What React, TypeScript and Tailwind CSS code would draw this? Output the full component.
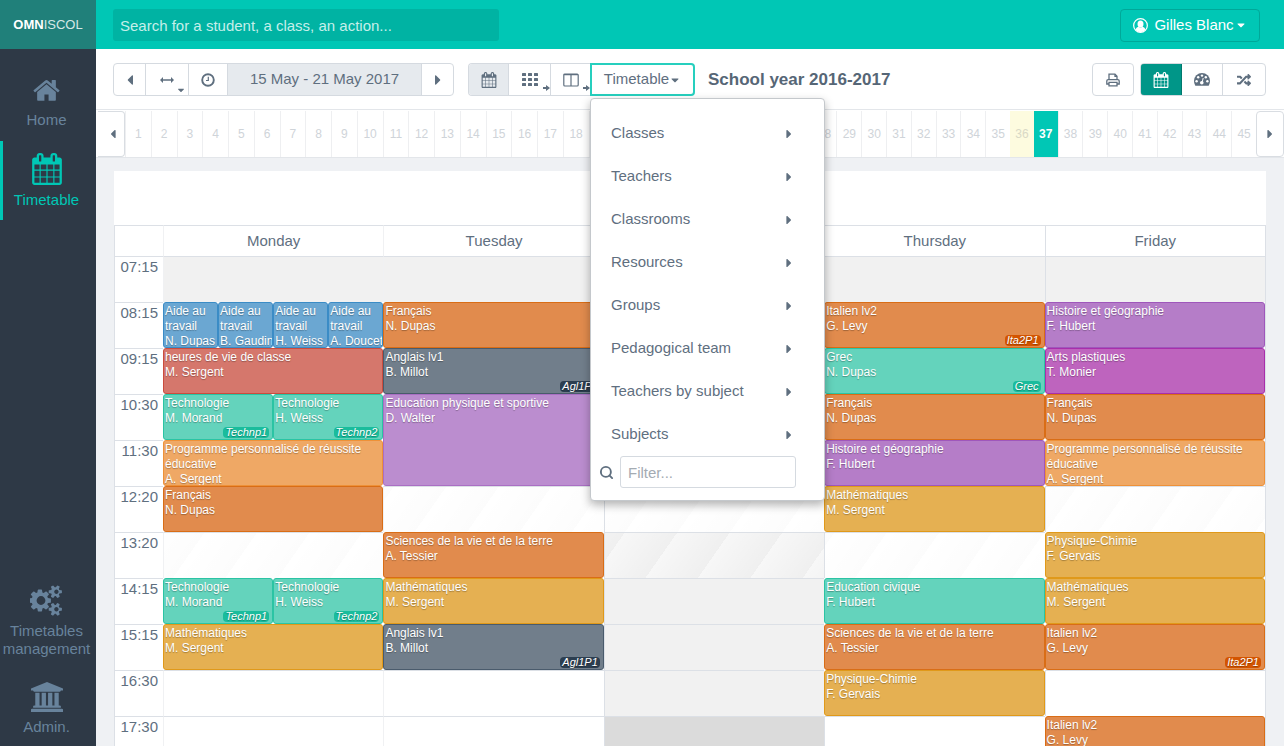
import React from "react";
import { FaCaretDown, FaCaretLeft, FaCaretRight, FaRandom } from "react-icons/fa";
import { Search } from "lucide-react";

type Colour =
  | "orange"
  | "slate"
  | "purple"
  | "lilac"
  | "teal"
  | "blue"
  | "red"
  | "peach"
  | "yellow"
  | "magenta";

type Lesson = { subject: string; teacher: string; colour: Colour; group?: string };
type Slot = { lessons?: Lesson[]; span?: number; shade?: "light" | "dark" } | null;

const eventColours: Record<Colour, string> = {
  orange: "bg-[#e18b4d] border-[#d96d16]",
  slate: "bg-[#717e8b] border-[#4a5b6c]",
  purple: "bg-[#b57dc8] border-[#9f57bb]",
  lilac: "bg-[#bb8dcf] border-[#aa6fc3]",
  teal: "bg-[#64d3bc] border-[#2bc4a4]",
  blue: "bg-[#6ba7d2] border-[#3b8cc6]",
  red: "bg-[#d5776c] border-[#cb4c3e]",
  peach: "bg-[#efa865] border-[#ee9138]",
  yellow: "bg-[#e5b052] border-[#e0991a]",
  magenta: "bg-[#be64be] border-[#a92fab]",
};

const tagColours: Record<Colour, string> = {
  orange: "bg-[#d35400]",
  slate: "bg-[#2c3e50]",
  purple: "bg-[#8e44ad]",
  lilac: "bg-[#8e44ad]",
  teal: "bg-[#1abc9c]",
  blue: "bg-[#2980b9]",
  red: "bg-[#c0392b]",
  peach: "bg-[#e67e22]",
  yellow: "bg-[#d68910]",
  magenta: "bg-[#9b1f9e]",
};

const L = (subject: string, teacher: string, colour: Colour, group?: string): Lesson => ({
  subject,
  teacher,
  colour,
  group,
});
const one = (...lessons: Lesson[]): Slot => ({ lessons });

const francais = L("Français", "N. Dupas", "orange");
const maths = L("Mathématiques", "M. Sergent", "yellow");
const anglais = L("Anglais lv1", "B. Millot", "slate", "Agl1P1");
const techno = one(
  L("Technologie", "M. Morand", "teal", "Technp1"),
  L("Technologie", "H. Weiss", "teal", "Technp2"),
);
const histoire = L("Histoire et géographie", "F. Hubert", "purple");
const italien = L("Italien lv2", "G. Levy", "orange", "Ita2P1");
const programme = L("Programme personnalisé de réussite éducative", "A. Sergent", "peach");
const sciences = L("Sciences de la vie et de la terre", "A. Tessier", "orange");
const physique = L("Physique-Chimie", "F. Gervais", "yellow");
const free: Slot = {};
const grey: Slot = { shade: "light" };

const rows: { time: string; striped?: boolean; slots: Slot[] }[] = [
  { time: "07:15", slots: [grey, grey, grey, grey, grey] },
  {
    time: "08:15",
    slots: [
      one(
        L("Aide au travail", "N. Dupas", "blue"),
        L("Aide au travail", "B. Gaudin", "blue"),
        L("Aide au travail", "H. Weiss", "blue"),
        L("Aide au travail", "A. Doucet", "blue"),
      ),
      one(francais),
      free,
      one(italien),
      one(histoire),
    ],
  },
  {
    time: "09:15",
    slots: [
      one(L("heures de vie de classe", "M. Sergent", "red")),
      one(anglais),
      free,
      one(L("Grec", "N. Dupas", "teal", "Grec")),
      one(L("Arts plastiques", "T. Monier", "magenta")),
    ],
  },
  {
    time: "10:30",
    slots: [
      techno,
      { lessons: [L("Education physique et sportive", "D. Walter", "lilac")], span: 2 },
      free,
      one(francais),
      one(francais),
    ],
  },
  { time: "11:30", slots: [one(programme), null, free, one(histoire), one(programme)] },
  { time: "12:20", striped: true, slots: [one(francais), free, free, one(maths), free] },
  { time: "13:20", striped: true, slots: [free, one(sciences), grey, free, one(physique)] },
  {
    time: "14:15",
    slots: [techno, one(maths), grey, one(L("Education civique", "F. Hubert", "teal")), one(maths)],
  },
  { time: "15:15", slots: [one(maths), one(anglais), grey, one(sciences), one(italien)] },
  { time: "16:30", slots: [free, free, grey, one(physique), free] },
  { time: "17:30", slots: [free, free, { shade: "dark" }, free, one(L("Italien lv2", "G. Levy", "orange"))] },
];

const days = ["Monday", "Tuesday", "Wednesday", "Thursday", "Friday"];
const menuItems = [
  "Classes",
  "Teachers",
  "Classrooms",
  "Resources",
  "Groups",
  "Pedagogical team",
  "Teachers by subject",
  "Subjects",
];
const weeks = Array.from({ length: 45 }, (_, i) => i + 1);

type IconProps = { className?: string };

function HomeIcon({ className }: IconProps) {
  return (
    <svg viewBox="64 200 1664 1400" className={className} fill="currentColor" aria-hidden="true">
      <path d="M1472 992v480q0 26-19 45t-45 19h-384v-384h-256v384h-384q-26 0-45-19t-19-45v-480q0-1 .5-3t.5-3l575-474 575 474q1 2 1 6zm223-69l-62 74q-8 9-21 11h-3q-13 0-21-7l-692-577-692 577q-12 8-24 7-13-2-21-11l-62-74q-8-10-7-23.5t11-21.5l719-599q32-26 76-26t76 26l244 204v-195q0-14 9-23t23-9h192q14 0 23 9t9 23v408l219 182q10 8 11 21.5t-7 23.5z" />
    </svg>
  );
}

function CalendarIcon({ className }: IconProps) {
  return (
    <svg viewBox="64 0 1664 1792" className={className} fill="currentColor" aria-hidden="true">
      <path d="M192 1664h288v-288h-288v288zm352 0h320v-288h-320v288zm-352-352h288v-320h-288v320zm352 0h320v-320h-320v320zm-352-384h288v-288h-288v288zm736 736h320v-288h-320v288zm-384-736h320v-288h-320v288zm768 736h288v-288h-288v288zm-384-352h320v-320h-320v320zm-352-864v-288q0-13-9.5-22.5t-22.5-9.5h-64q-13 0-22.5 9.5t-9.5 22.5v288q0 13 9.5 22.5t22.5 9.5h64q13 0 22.5-9.5t9.5-22.5zm736 864h288v-320h-288v320zm-384-384h320v-288h-320v288zm384 0h288v-288h-288v288zm32-480v-288q0-13-9.5-22.5t-22.5-9.5h-64q-13 0-22.5 9.5t-9.5 22.5v288q0 13 9.5 22.5t22.5 9.5h64q13 0 22.5-9.5t9.5-22.5zm384-64v1280q0 52-38 90t-90 38h-1408q-52 0-90-38t-38-90v-1280q0-52 38-90t90-38h128v-96q0-66 47-113t113-47h64q66 0 113 47t47 113v96h384v-96q0-66 47-113t113-47h64q66 0 113 47t47 113v96h128q52 0 90 38t38 90z" />
    </svg>
  );
}

function CogsIcon({ className }: IconProps) {
  return (
    <svg viewBox="0 0 1920 1792" className={className} fill="currentColor" aria-hidden="true">
      <path d="M896 896q0-106-75-181t-181-75-181 75-75 181 75 181 181 75 181-75 75-181zm768 512q0-52-38-90t-90-38-90 38-38 90q0 53 37.5 90.5t90.5 37.5 90.5-37.5 37.5-90.5zm0-1024q0-52-38-90t-90-38-90 38-38 90q0 53 37.5 90.5t90.5 37.5 90.5-37.5 37.5-90.5zm-448 421v185q0 10-7 19.5t-16 10.5l-155 24q-11 35-32 76 34 48 90 115 7 11 7 20 0 12-7 19-23 30-82.500 89.500t-78.500 59.500q-11 0-21-7l-115-90q-37 19-77 31-11 108-23 155-7 24-30 24h-186q-11 0-20-7.500t-10-17.500l-23-153q-34-10-75-31l-118 89q-7 7-20 7-11 0-21-8-144-133-144-160 0-9 7-19 10-14 41-53t47-61q-23-44-35-82l-152-24q-10-1-17-9.500t-7-19.500v-185q0-10 7-19.500t16-10.500l155-24q11-35 32-76-34-48-90-115-7-11-7-20 0-12 7-20 22-30 82-89t79-59q11 0 21 7l115 90q34-18 77-32 11-108 23-154 7-24 30-24h186q11 0 20 7.500t10 17.500l23 153q34 10 75 31l118-89q8-7 20-7 11 0 21 8 144 133 144 160 0 8-7 19-12 16-42 54t-45 60q23 48 34 82l152 23q10 2 17 10.500t7 19.500zm640 533v140q0 16-149 31-12 27-30 52 51 113 51 138 0 4-4 7-122 71-124 71-8 0-46-47t-52-68q-20 2-30 2t-30-2q-14 21-52 68t-46 47q-2 0-124-71-4-3-4-7 0-25 51-138-18-25-30-52-149-15-149-31v-140q0-16 149-31 13-29 30-52-51-113-51-138 0-4 4-7 4-2 35-20t59-34 30-16q8 0 46 46.500t52 67.500q20-2 30-2t30 2q51-71 92-112l6-2q4 0 124 70 4 3 4 7 0 25-51 138 17 23 30 52 149 15 149 31zm0-1024v140q0 16-149 31-12 27-30 52 51 113 51 138 0 4-4 7-122 71-124 71-8 0-46-47t-52-68q-20 2-30 2t-30-2q-14 21-52 68t-46 47q-2 0-124-71-4-3-4-7 0-25 51-138-18-25-30-52-149-15-149-31v-140q0-16 149-31 13-29 30-52-51-113-51-138 0-4 4-7 4-2 35-20t59-34 30-16q8 0 46 46.500t52 67.500q20-2 30-2t30 2q51-71 92-112l6-2q4 0 124 70 4 3 4 7 0 25-51 138 17 23 30 52 149 15 149 31z" />
    </svg>
  );
}

function BankIcon({ className }: IconProps) {
  return (
    <svg viewBox="0 0 1920 1792" className={className} fill="currentColor" aria-hidden="true">
      <path d="M960 0l960 384v128h-128q0 26-20.5 45t-48.5 19h-1526q-28 0-48.5-19t-20.5-45h-128v-128zM256 640h256v768h128v-768h256v768h128v-768h256v768h128v-768h256v768h59q28 0 48.5 19t20.5 45v64h-1664v-64q0-26 20.5-45t48.5-19h59v-768zM1851 1600q28 0 48.5 19t20.5 45v128h-1920v-128q0-26 20.5-45t48.5-19h1782z" />
    </svg>
  );
}

function PrintIcon({ className }: IconProps) {
  return (
    <svg viewBox="0 0 14 14" className={className} fill="none" stroke="currentColor" strokeWidth="1.3" aria-hidden="true">
      <path d="M3 7V1.2h6L11 3.2V7" />
      <path d="M9 1.2v2.2h2" />
      <path d="M3 11H.8V8q0-1.4 1.4-1.4h9.6q1.4 0 1.4 1.4v3H11" />
      <path d="M3 9.4h8v3.4H3z" />
    </svg>
  );
}

function GaugeIcon({ className }: IconProps) {
  return (
    <svg viewBox="0 0 16 13" className={className} aria-hidden="true">
      <path fill="currentColor" d="M8 0a8 8 0 0 0-8 8q0 2.4 1.2 4.4.2.3.6.3h12.4q.4 0 .6-.3Q16 10.4 16 8a8 8 0 0 0-8-8z" />
      <g fill="#fff">
        <circle cx="2.600" cy="8.200" r="1.200" />
        <circle cx="4.200" cy="4.300" r="1.200" />
        <circle cx="8" cy="2.600" r="1.200" />
        <circle cx="11.800" cy="4.300" r="1.200" />
        <circle cx="13.400" cy="8.200" r="1.200" />
      </g>
      <path d="M8 10l1.200-5" stroke="#fff" strokeWidth="1" />
      <circle cx="7.800" cy="9.800" r="1.800" fill="#fff" />
    </svg>
  );
}

function ColumnsIcon({ className }: IconProps) {
  return (
    <svg viewBox="0 0 16 14" className={className} fill="none" stroke="currentColor" strokeWidth="1.2" aria-hidden="true">
      <rect x=".8" y="1" width="14.4" height="12" rx="1" />
      <path d="M8 1v12M1 1.600h14" />
    </svg>
  );
}

function GridIcon({ className }: IconProps) {
  return (
    <svg viewBox="0 0 16 13" className={className} fill="currentColor" aria-hidden="true">
      {[0, 5, 10].map((y) =>
        [0, 6, 12].map((x) => <rect key={`${x}-${y}`} x={x} y={y} width="4" height="3" rx=".6" />),
      )}
    </svg>
  );
}

function RangeIcon({ className }: IconProps) {
  return (
    <svg viewBox="0 0 14 8" className={className} fill="currentColor" aria-hidden="true">
      <path d="M0 4l3-3v2.300h8V1l3 3-3 3V4.700H3V7z" />
    </svg>
  );
}

function ClockIcon({ className }: IconProps) {
  return (
    <svg viewBox="0 0 14 14" className={className} fill="none" stroke="currentColor" aria-hidden="true">
      <circle cx="7" cy="7" r="5.800" strokeWidth="1.900" />
      <path d="M7.300 3.800v3.700H5" strokeWidth="1.200" />
    </svg>
  );
}

function UserIcon({ className }: IconProps) {
  return (
    <svg viewBox="0 0 16 16" className={className} aria-hidden="true">
      <circle cx="8" cy="8" r="7.300" fill="none" stroke="currentColor" strokeWidth="1.300" />
      <ellipse cx="8" cy="6.400" rx="3.200" ry="3.800" fill="currentColor" />
      <path d="M2.600 12.600q.8-2.600 3-3.200 2.400 1.600 4.800 0 2.200.6 3 3.200Q11.300 15.200 8 15.200t-5.400-2.600z" fill="currentColor" />
    </svg>
  );
}

function MiniArrow() {
  return (
    <svg viewBox="0 0 7 6" className="absolute right-0 bottom-1 h-1.5 w-[7px]" fill="currentColor" aria-hidden="true">
      <path d="M0 2h3V0l4 3-4 3V4H0z" />
    </svg>
  );
}

function SideLink({
  label,
  active,
  children,
  className = "",
}: {
  label: string;
  active?: boolean;
  children: React.ReactNode;
  className?: string;
}) {
  return (
    <a
      href="#"
      className={`flex flex-col items-center border-l-[3px] pr-1.5 text-center text-[15px] leading-[18px] ${
        active ? "border-[#00c7b5] text-[#00c7b5]" : "border-transparent text-[#68839c]"
      } ${className}`}
    >
      {children}
      <span>{label}</span>
    </a>
  );
}

function Sidebar() {
  return (
    <aside className="flex w-24 shrink-0 flex-col bg-[#2e3946]">
      <a href="#" className="flex h-[49px] items-center justify-center bg-[#20807a] text-[13px] text-[#d5e8e6]">
        <span className="font-bold text-white">OMN</span>ISCOL
      </a>
      <nav className="flex grow flex-col">
        <SideLink label="Home" className="h-[92px] gap-[9px] pt-[30px]">
          <HomeIcon className="h-[23px] w-[27px]" />
        </SideLink>
        <SideLink label="Timetable" active className="h-[79px] gap-1.5 pt-3">
          <CalendarIcon className="h-8 w-[30px]" />
        </SideLink>
        <SideLink label="Timetables management" className="mt-auto gap-1.5">
          <CogsIcon className="h-[31px] w-[33px]" />
        </SideLink>
        <SideLink label="Admin." className="gap-1.5 pt-6 pb-2.5">
          <BankIcon className="h-[30px] w-8" />
        </SideLink>
      </nav>
    </aside>
  );
}

const tool = "relative flex h-full items-center justify-center";

function ViewMenu() {
  return (
    <div className="absolute top-[35px] left-0 z-20 w-[235px] rounded border border-[#c4c8cc] bg-white pt-[13px] pb-3 shadow-[0_4px_10px_rgba(0,0,0,0.3)]">
      <ul>
        {menuItems.map((item) => (
          <li key={item}>
            <button type="button" className="flex h-[43px] w-full items-center justify-between pr-7 pl-5 text-left">
              {item}
              <FaCaretRight className="size-3.5" />
            </button>
          </li>
        ))}
      </ul>
      <div className="flex items-center gap-1.5 pr-7 pl-2">
        <Search className="size-[15px] shrink-0" strokeWidth={3} aria-hidden="true" />
        <input
          type="text"
          aria-label="Filter"
          placeholder="Filter..."
          className="h-8 w-full min-w-0 rounded-[3px] border border-[#d5dae0] px-[7px] placeholder:text-[#a4abb3]"
        />
      </div>
    </div>
  );
}

function Toolbar() {
  return (
    <div className="flex h-[60px] shrink-0 items-center pt-px pr-[18px] pl-[17px]">
      <div className="flex h-[33px] divide-x divide-[#d5dae0] overflow-hidden rounded border border-[#d5dae0]">
        <button type="button" aria-label="Previous week" className={`${tool} w-8`}>
          <FaCaretLeft className="size-4" />
        </button>
        <button type="button" aria-label="Range" className={`${tool} w-[43px]`}>
          <RangeIcon className="h-2 w-3.5" />
          <FaCaretDown className="absolute right-0.5 bottom-0 size-2.5" />
        </button>
        <button type="button" aria-label="Today" className={`${tool} w-[39px]`}>
          <ClockIcon className="size-3.5" />
        </button>
        <button type="button" className={`${tool} w-[194px] bg-[#e6eaee]`}>
          15 May - 21 May 2017
        </button>
        <button type="button" aria-label="Next week" className={`${tool} w-[31px]`}>
          <FaCaretRight className="size-4" />
        </button>
      </div>

      <div className="ml-3.5 flex h-[33px]">
        <div className="flex divide-x divide-[#d5dae0] overflow-hidden rounded-l border border-r-0 border-[#d5dae0]">
          <button type="button" aria-label="Calendar view" className={`${tool} w-10 bg-[#e6eaee]`}>
            <CalendarIcon className="size-4" />
          </button>
          <button type="button" aria-label="Grid view" className={`${tool} w-[42px]`}>
            <GridIcon className="h-[13px] w-4" />
            <MiniArrow />
          </button>
          <button type="button" aria-label="Columns view" className={`${tool} w-[39px]`}>
            <ColumnsIcon className="h-3.5 w-4" />
            <MiniArrow />
          </button>
        </div>
        <div className="relative">
          <button
            type="button"
            aria-expanded="true"
            className="flex h-full w-[105px] items-center justify-center rounded-r border-2 border-[#26cfbe] bg-white"
          >
            Timetable
            <FaCaretDown className="size-3" />
          </button>
          <ViewMenu />
        </div>
      </div>

      <h1 className="ml-[13px] text-[17px] font-bold whitespace-nowrap text-[#566676]">School year 2016-2017</h1>

      <button
        type="button"
        aria-label="Print"
        className="ml-auto flex h-[33px] w-[42px] items-center justify-center rounded border border-[#d5dae0]"
      >
        <PrintIcon className="size-3.5" />
      </button>
      <div className="ml-1.5 flex h-[33px] divide-x divide-[#d5dae0] overflow-hidden rounded border border-[#d5dae0]">
        <button
          type="button"
          aria-label="Timetable"
          className="-my-px -ml-px flex w-[42px] items-center justify-center rounded-l border border-[#00796d] bg-[#009688] text-white"
        >
          <CalendarIcon className="size-4" />
        </button>
        <button type="button" aria-label="Dashboard" className={`${tool} w-[41px]`}>
          <GaugeIcon className="h-[13px] w-4" />
        </button>
        <button type="button" aria-label="Shuffle" className={`${tool} w-[42px]`}>
          <FaRandom className="size-3.5" />
        </button>
      </div>
    </div>
  );
}

function weekClass(week: number) {
  if (week === 37) return "grow-25 bg-[#00c7b5] font-bold text-white";
  if (week === 36) return "grow-25 bg-[#fdfbdf] text-[#d9d9c6]";
  if (week > 18) return "grow-25 border-l border-[#eeeff1] text-[#cfd4d9]";
  return "grow-26 border-l border-[#eeeff1] text-[#cfd4d9]";
}

function WeekStrip() {
  return (
    <div className="flex h-[49px] shrink-0 border-y border-[#e3e6ea] pt-px pl-0.5 text-xs">
      <button
        type="button"
        aria-label="Earlier weeks"
        className="flex w-[27px] items-center justify-end rounded-r-sm border border-l-0 border-[#d9dde2] pr-1"
      >
        <FaCaretLeft className="size-3.5" />
      </button>
      <div className="flex grow">
        {weeks.map((week) => (
          <button key={week} type="button" className={`basis-0 ${weekClass(week)}`}>
            {week}
          </button>
        ))}
      </div>
      <button
        type="button"
        aria-label="Later weeks"
        className="flex w-7 items-center justify-center rounded-sm border border-[#d9dde2]"
      >
        <FaCaretRight className="size-3.5" />
      </button>
    </div>
  );
}

function LessonCard({ lesson }: { lesson: Lesson }) {
  return (
    <div
      className={`relative min-w-0 flex-1 overflow-hidden rounded-[3px] border pt-px pl-px text-xs leading-[15px] text-white [text-shadow:0_1px_1px_rgba(0,0,0,0.3)] ${eventColours[lesson.colour]}`}
    >
      <p>{lesson.subject}</p>
      <p className="whitespace-nowrap">{lesson.teacher}</p>
      {lesson.group && (
        <span
          className={`absolute right-[3px] bottom-px rounded-sm px-[2px] text-[11px] leading-[11px] italic ${tagColours[lesson.colour]}`}
        >
          {lesson.group}
        </span>
      )}
    </div>
  );
}

const stripes =
  "bg-[repeating-linear-gradient(125deg,rgba(0,0,0,0)_0px,rgba(0,0,0,0.012)_43px)] bg-fixed";
const greyStripes =
  "bg-[repeating-linear-gradient(125deg,rgba(0,0,0,0)_0px,rgba(0,0,0,0.03)_43px)] bg-fixed";

function SlotCell({ slot, striped, day }: { slot: Slot; striped?: boolean; day: number }) {
  if (!slot) return null;
  const span = slot.span ?? 1;
  if (slot.lessons) {
    return (
      <td rowSpan={span} className="p-0">
        <div className={`flex ${span === 2 ? "h-[92px]" : "h-[46px]"}`}>
          {slot.lessons.map((lesson, i) => (
            <LessonCard key={i} lesson={lesson} />
          ))}
        </div>
      </td>
    );
  }
  const left = day > 1 ? "border-l-[#dce0e6]" : "border-l-[#f0f1f3]";
  let fill = "bg-white";
  if (slot.shade === "dark") fill = "bg-[#dbdbdb]";
  else if (slot.shade === "light") fill = striped ? `bg-[#f7f7f7] ${greyStripes}` : "bg-[#f1f1f1]";
  else if (striped) fill = `bg-white ${stripes}`;
  return <td className={`border-t border-l border-t-[#dce0e6] p-0 ${left} ${fill}`} />;
}

function Timetable() {
  return (
    <div className="bg-white pt-[54px]">
      <table className="w-full table-fixed border-separate border-spacing-0 border-r border-l border-[#dce0e6]">
        <colgroup>
          <col className="w-12" />
          <col />
          <col />
          <col />
          <col />
          <col />
        </colgroup>
        <thead>
          <tr className="h-[31px]">
            <td className="border-t border-[#dce0e6] p-0" />
            {days.map((day, i) => (
              <th
                key={day}
                scope="col"
                className={`border-t border-l border-t-[#dce0e6] p-0 font-normal ${
                  i > 1 ? "border-l-[#dce0e6]" : "border-l-[#f0f1f3]"
                }`}
              >
                {day}
              </th>
            ))}
          </tr>
        </thead>
        <tbody>
          {rows.map((row) => (
            <tr key={row.time} className="h-[46px]">
              <th
                scope="row"
                className="h-[46px] border-t border-[#dce0e6] p-0 pr-[5px] text-right align-top leading-[19px] font-normal"
              >
                {row.time}
              </th>
              {row.slots.map((slot, i) => (
                <SlotCell key={i} slot={slot} striped={row.striped} day={i} />
              ))}
            </tr>
          ))}
        </tbody>
      </table>
    </div>
  );
}

export default function App() {
  return (
    <div className="flex h-screen overflow-hidden bg-[#eff1f4] font-['Liberation_Sans',Arial,sans-serif] text-[15px] text-[#5f6f7f]">
      <Sidebar />
      <div className="flex min-w-0 grow flex-col">
        <header className="flex h-[49px] shrink-0 items-center justify-between bg-[#00c7b5] pt-px pr-6 pl-[17px]">
          <input
            type="search"
            aria-label="Search"
            placeholder="Search for a student, a class, an action..."
            className="h-8 w-[386px] rounded-[3px] bg-[#00b3a3] px-[7px] text-white placeholder:text-[#c5efea]"
          />
          <button
            type="button"
            className="flex h-[33px] w-[140px] items-center justify-center gap-1.5 rounded border border-[#00a899] text-white"
          >
            <UserIcon className="size-[15px]" />
            <span className="flex items-center gap-px">
              Gilles Blanc
              <FaCaretDown className="size-3" />
            </span>
          </button>
        </header>
        <div className="flex flex-col bg-white">
          <Toolbar />
          <WeekStrip />
        </div>
        <main className="min-h-0 grow overflow-hidden px-[18px] pt-[13px]">
          <Timetable />
        </main>
      </div>
    </div>
  );
}
